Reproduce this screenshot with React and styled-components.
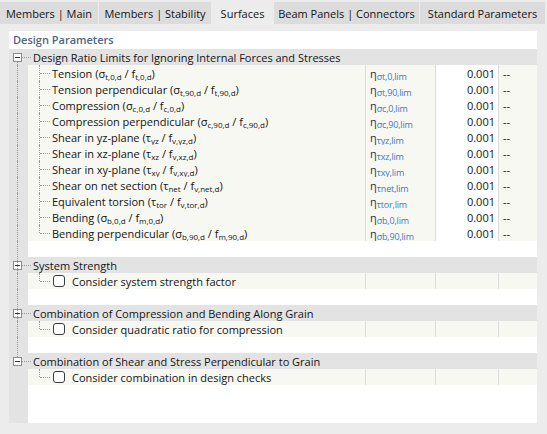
import React from 'react';
import styled, { createGlobalStyle } from 'styled-components';

const GlobalStyle = createGlobalStyle`
  body {
    margin: 0;
    background: #ececec;
    font-family: "Open Sans", "Noto Sans", sans-serif;
    font-size: 11px;
    color: #141414;
  }
`;

const Page = styled.div`
  width: 547px;
  height: 434px;
  display: flex;
  flex-direction: column;
`;

const TabBar = styled.div`
  display: flex;
  align-items: flex-end;
  height: 24px;
`;

const Tab = styled.div`
  width: ${(p) => p.$w}px;
  height: ${(p) => (p.$active ? 24 : 22)}px;
  box-sizing: border-box;
  border-right: 1px solid #ececec;
  background: ${(p) => (p.$active ? '#ececec' : '#dcdcdc')};
  display: flex;
  align-items: center;
  justify-content: center;
  white-space: nowrap;
  padding-top: ${(p) => (p.$active ? 2 : 0)}px;
`;

const Panel = styled.div`
  margin: 7px 10px 11px 9px;
  height: 392px;
  background: #fff;
  display: flex;
  flex-direction: column;
  overflow: hidden;
`;

const Title = styled.div`
  height: 18px;
  line-height: 18px;
  padding-left: 4px;
  font-weight: 600;
  color: #4d6684;
`;

const HeaderRow = styled.div`
  height: 16px;
  display: flex;
  align-items: center;
  background: #e3e3e3;
  padding-left: 4px;
  white-space: nowrap;
`;

const Expander = styled.div`
  position: relative;
  width: 9px;
  height: 9px;
  box-sizing: border-box;
  border: 1px solid #8c8c8c;
  background: #fff;
  display: flex;
  align-items: center;
  justify-content: center;
  flex: none;

  &::after {
    content: '';
    width: 5px;
    height: 1px;
    background: #333;
  }

  &::before {
    content: '';
    position: absolute;
    left: 3px;
    top: ${(p) => (p.$first ? '8px' : '-4px')};
    height: ${(p) => (p.$first ? '5px' : p.$last ? '3px' : '17px')};
    border-left: 1px dotted #9a9a9a;
  }
`;

const HDots = styled.div`
  width: ${(p) => p.$w}px;
  border-top: 1px dotted #9a9a9a;
  margin-right: 2px;
  flex: none;
`;

const Row = styled.div`
  height: 16px;
  display: grid;
  grid-template-columns: 19px 337px 70px 63px 39px;
`;

const Gutter = styled.div`
  background: #e3e3e3;
  position: relative;

  &::before {
    content: '';
    display: ${(p) => (p.$line ? 'block' : 'none')};
    position: absolute;
    left: 8px;
    top: 0;
    bottom: 0;
    border-left: 1px dotted #9a9a9a;
  }
`;

const Cell = styled.div`
  background: ${(p) => (p.$white ? '#fff' : p.$blank ? '#fff' : '#f8f8f2')};
  border-left: ${(p) => (p.$sep ? '1px solid #dcdcdc' : 'none')};
  display: flex;
  align-items: center;
  justify-content: ${(p) => (p.$right ? 'flex-end' : 'flex-start')};
  padding: ${(p) => (p.$right ? '0 3px 0 0' : p.$pad ? '0 0 0 4px' : '0')};
  white-space: nowrap;
  overflow: hidden;
`;

const Twig = styled.div`
  position: relative;
  width: 24px;
  height: 16px;
  flex: none;

  &::before {
    content: '';
    position: absolute;
    left: 11px;
    top: 0;
    height: ${(p) => (p.$last ? '8px' : '16px')};
    border-left: 1px dotted #9a9a9a;
  }

  &::after {
    content: '';
    position: absolute;
    left: 12px;
    width: 10px;
    top: 8px;
    border-top: 1px dotted #9a9a9a;
  }
`;

const Sub = styled.sub`
  font-size: 8px;
  vertical-align: -2px;
  line-height: 0;
`;

const Symbol = styled.span`
  color: #1e2d52;
  font-size: 11px;
`;

const SymbolSub = styled(Sub)`
  font-size: 9px;
  color: #3d78c9;
  letter-spacing: -0.2px;
`;

const Checkbox = styled.div`
  width: 12px;
  height: 12px;
  box-sizing: border-box;
  border: 1px solid #3a3a3a;
  border-radius: 3px;
  background: #fff;
  margin: 0 7px 0 1px;
  flex: none;
`;

const Filler = styled.div`
  flex: 1;
  display: grid;
  grid-template-columns: 19px 1fr;
`;

const tabs = [
  ['Members | Main', 99],
  ['Members | Stability', 113],
  ['Surfaces', 62, true],
  ['Beam Panels | Connectors', 146],
  ['Standard Parameters', 126],
];

const limits = [
  ['Tension', 'σ', 't,0,d', 'f', 't,0,d', 'σt,0,lim'],
  ['Tension perpendicular', 'σ', 't,90,d', 'f', 't,90,d', 'σt,90,lim'],
  ['Compression', 'σ', 'c,0,d', 'f', 'c,0,d', 'σc,0,lim'],
  ['Compression perpendicular', 'σ', 'c,90,d', 'f', 'c,90,d', 'σc,90,lim'],
  ['Shear in yz-plane', 'τ', 'yz', 'f', 'v,yz,d', 'τyz,lim'],
  ['Shear in xz-plane', 'τ', 'xz', 'f', 'v,xz,d', 'τxz,lim'],
  ['Shear in xy-plane', 'τ', 'xy', 'f', 'v,xy,d', 'τxy,lim'],
  ['Shear on net section', 'τ', 'net', 'f', 'v,net,d', 'τnet,lim'],
  ['Equivalent torsion', 'τ', 'tor', 'f', 'v,tor,d', 'τtor,lim'],
  ['Bending', 'σ', 'b,0,d', 'f', 'm,0,d', 'σb,0,lim'],
  ['Bending perpendicular', 'σ', 'b,90,d', 'f', 'm,90,d', 'σb,90,lim'],
];

const groups = [
  ['System Strength', 'Consider system strength factor'],
  ['Combination of Compression and Bending Along Grain', 'Consider quadratic ratio for compression'],
  ['Combination of Shear and Stress Perpendicular to Grain', 'Consider combination in design checks'],
];

const Header = ({ title, first, last }) => (
  <HeaderRow>
    <Expander $first={first} $last={last} />
    <HDots $w={9} />
    <span>{title}</span>
  </HeaderRow>
);

const BlankRow = () => (
  <Row>
    <Gutter $line />
    <Cell $blank />
    <Cell $blank />
    <Cell $blank />
    <Cell $blank />
  </Row>
);

const App = () => (
  <Page>
    <GlobalStyle />
    <TabBar>
      {tabs.map(([label, w, active]) => (
        <Tab key={label} $w={w} $active={active}>{label}</Tab>
      ))}
    </TabBar>
    <Panel>
      <Title>Design Parameters</Title>
      <Header title="Design Ratio Limits for Ignoring Internal Forces and Stresses" first />
      {limits.map(([name, s, ss, f, fs, sym], i) => (
        <Row key={name}>
          <Gutter $line />
          <Cell>
            <Twig $last={i === limits.length - 1} />
            <span>
              {name} ({s}<Sub>{ss}</Sub> / {f}<Sub>{fs}</Sub>)
            </span>
          </Cell>
          <Cell $sep $pad>
            <span>
              <Symbol>η</Symbol>
              <SymbolSub>{sym}</SymbolSub>
            </span>
          </Cell>
          <Cell $sep $white $right>0.001</Cell>
          <Cell $sep $pad>--</Cell>
        </Row>
      ))}
      {groups.map(([title, label], i) => (
        <React.Fragment key={title}>
          <BlankRow />
          <Header title={title} last={i === groups.length - 1} />
          <Row>
            <Gutter $line={i < groups.length - 1} />
            <Cell>
              <Twig $last />
              <Checkbox />
              <span>{label}</span>
            </Cell>
            <Cell $sep />
            <Cell $sep />
            <Cell $sep />
          </Row>
        </React.Fragment>
      ))}
      <Filler>
        <Gutter />
        <div />
      </Filler>
    </Panel>
  </Page>
);

export default App;
